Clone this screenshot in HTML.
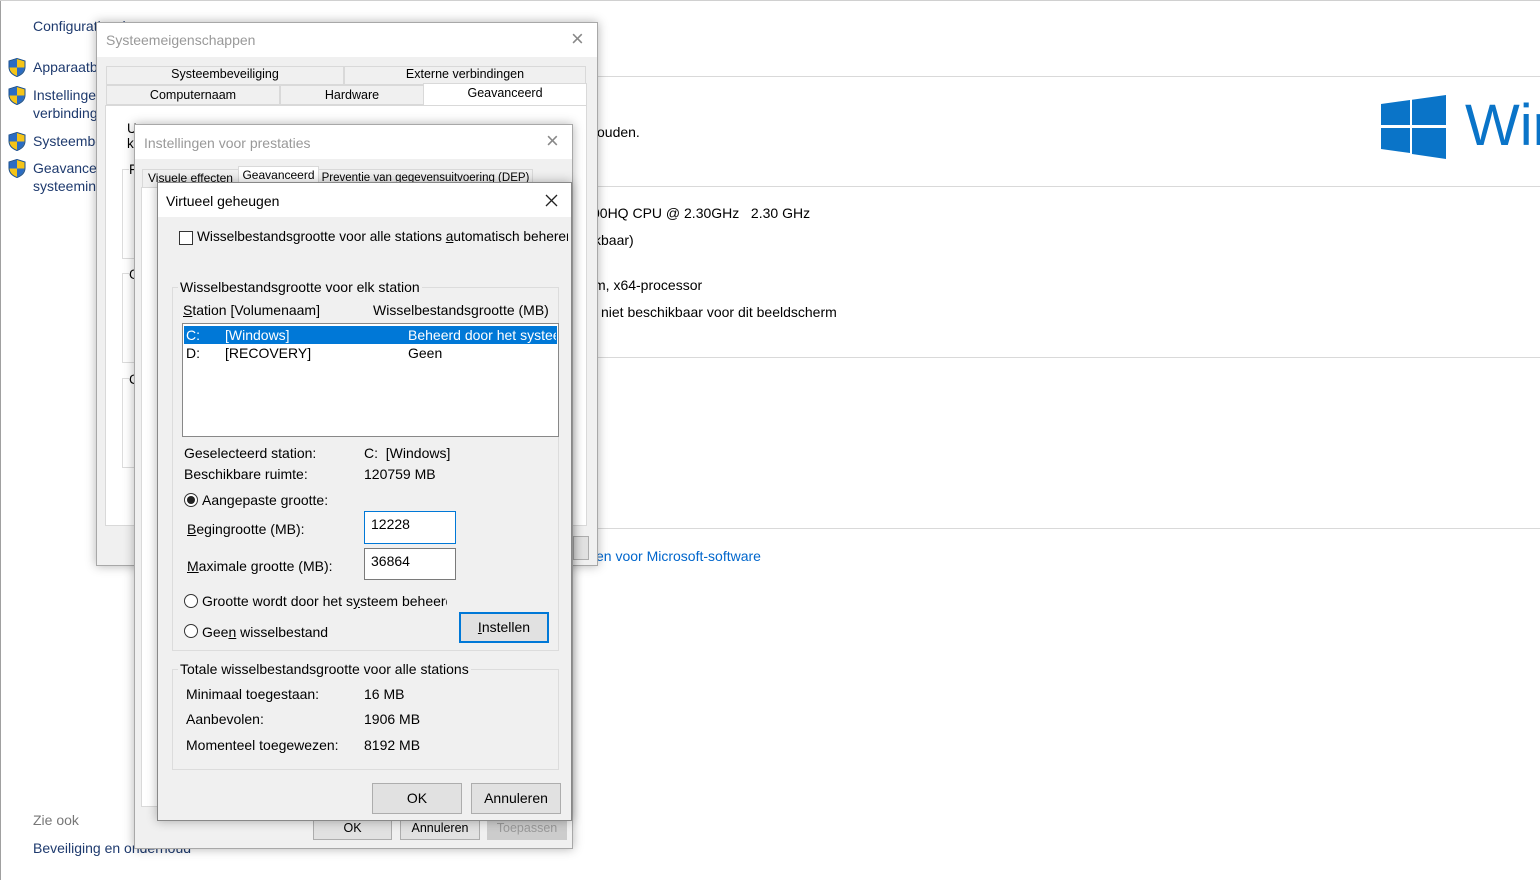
<!DOCTYPE html>
<html><head><meta charset="utf-8"><style>
*{margin:0;padding:0;box-sizing:border-box}
body{width:1540px;height:880px;position:relative;overflow:hidden;background:#fff;font-family:"Liberation Sans",sans-serif;font-size:13.5px;color:#000}
.a{position:absolute;white-space:nowrap}
.hl{position:absolute;left:597px;right:0;height:1px;background:#d9d9d9}
.nav{color:#1e3a6e;font-size:14px}
.sh{position:absolute;left:8px;width:18px;height:19px}
.dlg{position:absolute;background:#f0f0f0;border:1px solid #a8a8a8;box-shadow:0 0 10px rgba(0,0,0,.3);overflow:hidden}
.tb{position:absolute;left:0;right:0;top:0;background:#fff}
.tab{position:absolute;background:#f0f0f0;border:1px solid #d9d9d9;text-align:center;font-size:12.5px;overflow:hidden;white-space:nowrap}
.btn{position:absolute;background:#e1e1e1;border:1px solid #adadad;text-align:center;font-size:14px}
.grp{position:absolute;border:1px solid #dcdcdc}
.rad{position:absolute;width:14px;height:14px;border:1px solid #333;border-radius:50%;background:#fff}
u{text-decoration:underline}
</style></head><body>
<div style="position:absolute;left:0;top:0;width:1px;height:880px;background:#a0a0a0"></div>
<div style="position:absolute;left:0;top:0;width:1540px;height:1px;background:#d0d0d0"></div>

<div class="a nav" style="left:33px;top:18px">Configuratiescherm</div>
<svg class="sh" style="top:58px" viewBox="0 0 18 19"><path d="M9 0.5L1 3v6c0 5 4 8 8 9.5 4-1.5 8-4.5 8-9.5V3z" fill="#f5c418" stroke="#1a4f8f" stroke-width="1"/><path d="M9 1L1.5 3.3V9.5H9zM9 9.5h7.5c-.3 4.5-4 7.2-7.5 8.5z" fill="#2a6cc4"/></svg>
<svg class="sh" style="top:86px" viewBox="0 0 18 19"><path d="M9 0.5L1 3v6c0 5 4 8 8 9.5 4-1.5 8-4.5 8-9.5V3z" fill="#f5c418" stroke="#1a4f8f" stroke-width="1"/><path d="M9 1L1.5 3.3V9.5H9zM9 9.5h7.5c-.3 4.5-4 7.2-7.5 8.5z" fill="#2a6cc4"/></svg>
<svg class="sh" style="top:132px" viewBox="0 0 18 19"><path d="M9 0.5L1 3v6c0 5 4 8 8 9.5 4-1.5 8-4.5 8-9.5V3z" fill="#f5c418" stroke="#1a4f8f" stroke-width="1"/><path d="M9 1L1.5 3.3V9.5H9zM9 9.5h7.5c-.3 4.5-4 7.2-7.5 8.5z" fill="#2a6cc4"/></svg>
<svg class="sh" style="top:159px" viewBox="0 0 18 19"><path d="M9 0.5L1 3v6c0 5 4 8 8 9.5 4-1.5 8-4.5 8-9.5V3z" fill="#f5c418" stroke="#1a4f8f" stroke-width="1"/><path d="M9 1L1.5 3.3V9.5H9zM9 9.5h7.5c-.3 4.5-4 7.2-7.5 8.5z" fill="#2a6cc4"/></svg>
<div class="a nav" style="left:33px;top:59px">Apparaatbeheer</div>
<div class="a nav" style="left:33px;top:87px">Instellingen voor externe</div>
<div class="a nav" style="left:33px;top:105px">verbinding</div>
<div class="a nav" style="left:33px;top:133px">Systeembeveiliging</div>
<div class="a nav" style="left:33px;top:160px">Geavanceerde</div>
<div class="a nav" style="left:33px;top:178px">systeeminstellingen</div>
<div class="a" style="left:33px;top:812px;color:#777;font-size:14px">Zie ook</div>
<div class="a nav" style="left:33px;top:840px">Beveiliging en onderhoud</div>

<div class="hl" style="top:76px"></div>
<div class="hl" style="top:186px"></div>
<div class="hl" style="top:357px"></div>
<div class="hl" style="top:528px"></div>
<div class="a" style="left:597px;top:124px;font-size:14px">ouden.</div>
<div class="a" style="left:592px;top:205px;font-size:14px">00HQ CPU @ 2.30GHz &nbsp; 2.30 GHz</div>
<div class="a" style="left:594px;top:232px;font-size:14px">kbaar)</div>
<div class="a" style="left:594px;top:277px;font-size:14px">m, x64-processor</div>
<div class="a" style="left:601px;top:304px;font-size:14px">niet beschikbaar voor dit beeldscherm</div>
<div class="a" style="left:596px;top:548px;font-size:14px;color:#0066cc">en voor Microsoft-software</div>
<svg style="position:absolute;left:1381px;top:95px" width="66" height="64" viewBox="0 0 66 64"><path d="M0 9L29 5V30H0zM31 4.7L65 0V30H31zM0 33H29V58L0 54zM31 33H65V64L31 59z" fill="#0a74c8"/></svg>
<div class="a" style="left:1465px;top:92px;font-size:58px;color:#0a74c8">Wir</div>

<!-- Dialog 1 -->
<div class="dlg" style="left:96px;top:22px;width:502px;height:544px">
 <div class="tb" style="height:34px"></div>
 <div class="a" style="left:9px;top:9px;color:#999;font-size:14px">Systeemeigenschappen</div>
 <div class="a" style="left:474px;top:3px;color:#888;font-size:22px">×</div>
 <div class="tab" style="left:9px;top:43px;width:238px;height:19px">Systeembeveiliging</div>
 <div class="tab" style="left:247px;top:43px;width:242px;height:19px">Externe verbindingen</div>
 <div class="tab" style="left:9px;top:62px;width:174px;height:20px;line-height:18px">Computernaam</div>
 <div class="tab" style="left:183px;top:62px;width:144px;height:20px;line-height:18px">Hardware</div>
 <div class="tab" style="left:326px;top:60px;width:164px;height:23px;background:#fff;border-bottom:none;line-height:18px">Geavanceerd</div>
 <div style="position:absolute;left:8px;top:82px;width:482px;height:421px;background:#fff;border:1px solid #d9d9d9"></div>
 <div class="a" style="left:30px;top:98px">U</div>
 <div class="a" style="left:30px;top:113px">k</div>
 <div class="grp" style="left:25px;top:146px;width:20px;height:90px"></div><div class="a" style="left:32px;top:139px;background:#fff">F</div>
 <div class="grp" style="left:25px;top:250px;width:20px;height:90px"></div><div class="a" style="left:32px;top:244px;background:#fff">G</div>
 <div class="grp" style="left:25px;top:355px;width:20px;height:90px"></div><div class="a" style="left:32px;top:349px;background:#fff">C</div>
 <div class="btn" style="left:476px;top:513px;width:16px;height:24px"></div>
</div>

<!-- Dialog 2 -->
<div class="dlg" style="left:134px;top:124px;width:439px;height:725px">
 <div class="tb" style="height:34px"></div>
 <div class="a" style="left:9px;top:10px;color:#999;font-size:14px">Instellingen voor prestaties</div>
 <div class="a" style="left:411px;top:3px;color:#888;font-size:22px">×</div>
 <div class="tab" style="left:7px;top:44px;width:97px;height:19px;line-height:17px;font-size:12px">Visuele effecten</div>
 <div class="tab" style="left:103px;top:41px;width:81px;height:22px;background:#fff;border-bottom:none;line-height:17px;font-size:12px">Geavanceerd</div>
 <div class="tab" style="left:183px;top:44px;width:215px;height:19px;line-height:17px;font-size:11.5px">Preventie van gegevensuitvoering (DEP)</div>
 <div style="position:absolute;left:6px;top:62px;width:425px;height:620px;background:#fff;border:1px solid #d9d9d9"></div>
 <div class="btn" style="left:178px;top:693px;width:79px;height:22px;font-size:12.5px;line-height:19px">OK</div>
 <div class="btn" style="left:265px;top:693px;width:80px;height:22px;font-size:12.5px;line-height:19px">Annuleren</div>
 <div class="btn" style="left:352px;top:693px;width:80px;height:22px;font-size:12.5px;line-height:19px;color:#999;background:#ccc;border-color:#ccc">Toepassen</div>
</div>

<!-- Dialog 3 -->
<div class="dlg" style="left:157px;top:182px;width:415px;height:639px;border-color:#888">
 <div class="tb" style="height:34px"></div>
 <div class="a" style="left:8px;top:10px;font-size:14px">Virtueel geheugen</div>
 <svg style="position:absolute;left:387px;top:11px" width="13" height="13"><path d="M1 1L12 12M12 1L1 12" stroke="#222" stroke-width="1.3"/></svg>
 <div style="position:absolute;left:21px;top:48px;width:14px;height:14px;border:1px solid #333;background:#fff"></div>
 <div class="a" style="left:39px;top:46px;font-size:13.7px;width:371px;overflow:hidden">Wisselbestandsgrootte voor alle stations <u>a</u>utomatisch beheren</div>
 <div class="grp" style="left:14px;top:104px;width:387px;height:364px"></div>
 <div class="a" style="left:20px;top:96px;font-size:14px;background:#f0f0f0;padding:0 2px">Wisselbestandsgrootte voor elk station</div>
 <div class="a" style="left:25px;top:119px;font-size:14px"><u>S</u>tation [Volumenaam]</div>
 <div class="a" style="left:215px;top:119px;font-size:14px">Wisselbestandsgrootte (MB)</div>
 <div style="position:absolute;left:24px;top:140px;width:377px;height:114px;background:#fff;border:1px solid #888"></div>
 <div style="position:absolute;left:26px;top:143px;width:373px;height:18px;background:#0078d7"></div>
 <div class="a" style="left:28px;top:144px;color:#fff;font-size:14px">C:</div>
 <div class="a" style="left:67px;top:144px;color:#fff;font-size:14px">[Windows]</div>
 <div class="a" style="left:250px;top:144px;color:#fff;font-size:14px;width:148px;overflow:hidden">Beheerd door het systeem</div>
 <div class="a" style="left:28px;top:162px;font-size:14px">D:</div>
 <div class="a" style="left:67px;top:162px;font-size:14px">[RECOVERY]</div>
 <div class="a" style="left:250px;top:162px;font-size:14px">Geen</div>
 <div class="a" style="left:26px;top:262px;font-size:14px">Geselecteerd station:</div>
 <div class="a" style="left:206px;top:262px;font-size:14px">C: &nbsp;[Windows]</div>
 <div class="a" style="left:26px;top:283px;font-size:14px">Beschikbare ruimte:</div>
 <div class="a" style="left:206px;top:283px;font-size:14px">120759 MB</div>
 <div class="rad" style="left:26px;top:310px"><div style="position:absolute;left:2px;top:2px;width:8px;height:8px;border-radius:50%;background:#222"></div></div>
 <div class="a" style="left:44px;top:309px;font-size:14px">Aangepaste <u>g</u>rootte:</div>
 <div class="a" style="left:29px;top:338px;font-size:14px"><u>B</u>egingrootte (MB):</div>
 <div style="position:absolute;left:206px;top:328px;width:92px;height:33px;background:#fff;border:1px solid #0078d7"></div>
 <div class="a" style="left:213px;top:333px;font-size:14px">12228</div>
 <div class="a" style="left:29px;top:375px;font-size:14px"><u>M</u>aximale grootte (MB):</div>
 <div style="position:absolute;left:206px;top:365px;width:92px;height:32px;background:#fff;border:1px solid #7a7a7a"></div>
 <div class="a" style="left:213px;top:370px;font-size:14px">36864</div>
 <div class="rad" style="left:26px;top:411px"></div>
 <div class="a" style="left:44px;top:410px;font-size:14px;width:245px;overflow:hidden">Grootte wordt door het s<u>y</u>steem beheerd</div>
 <div class="rad" style="left:26px;top:441px"></div>
 <div class="a" style="left:44px;top:441px;font-size:14px">Gee<u>n</u> wisselbestand</div>
 <div class="btn" style="left:301px;top:429px;width:90px;height:31px;border:2px solid #0078d7;line-height:27px"><u>I</u>nstellen</div>
 <div class="grp" style="left:14px;top:486px;width:387px;height:101px"></div>
 <div class="a" style="left:20px;top:478px;font-size:14px;background:#f0f0f0;padding:0 2px">Totale wisselbestandsgrootte voor alle stations</div>
 <div class="a" style="left:28px;top:503px;font-size:14px">Minimaal toegestaan:</div><div class="a" style="left:206px;top:503px;font-size:14px">16 MB</div>
 <div class="a" style="left:28px;top:528px;font-size:14px">Aanbevolen:</div><div class="a" style="left:206px;top:528px;font-size:14px">1906 MB</div>
 <div class="a" style="left:28px;top:554px;font-size:14px">Momenteel toegewezen:</div><div class="a" style="left:206px;top:554px;font-size:14px">8192 MB</div>
 <div class="btn" style="left:214px;top:600px;width:90px;height:31px;line-height:29px">OK</div>
 <div class="btn" style="left:313px;top:600px;width:90px;height:31px;line-height:29px">Annuleren</div>
</div>
</body></html>
